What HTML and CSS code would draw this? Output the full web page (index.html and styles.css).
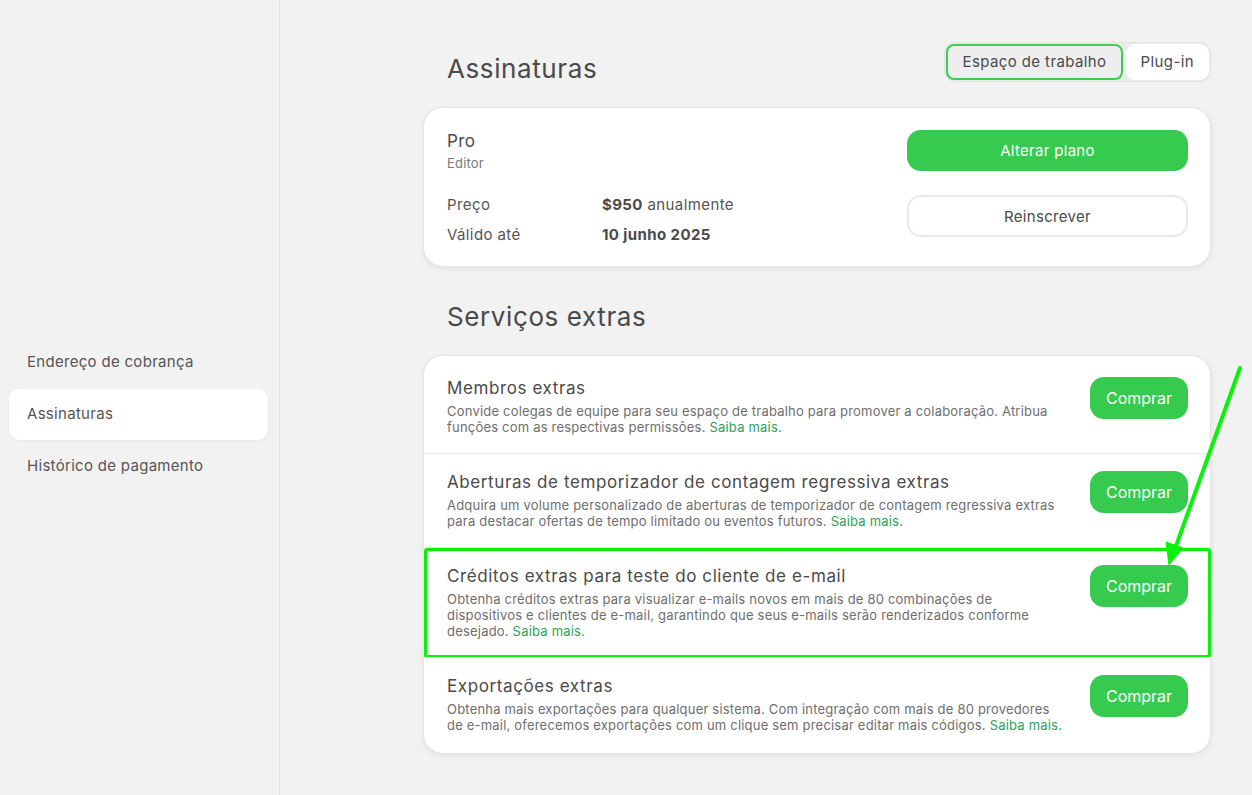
FILE: index.html
```html
<!DOCTYPE html>
<html lang="pt">
<head>
<meta charset="utf-8">
<title>Assinaturas</title>
<link rel="stylesheet" href="styles.css">
</head>
<body>
<div class="app">
  <aside class="sidebar">
    <nav class="nav">
      <a class="nav-item">Endereço de cobrança</a>
      <a class="nav-item active">Assinaturas</a>
      <a class="nav-item">Histórico de pagamento</a>
    </nav>
  </aside>
  <main class="main">
    <div class="content">
      <div class="header">
        <h1 class="title">Assinaturas</h1>
        <div class="toggle">
          <span class="seg seg-active">Espaço de trabalho</span>
          <span class="seg seg-white">Plug-in</span>
        </div>
      </div>
      <section class="card plan">
        <div class="plan-info">
          <div class="plan-name">Pro</div>
          <div class="plan-role">Editor</div>
          <div class="plan-rows">
            <div class="plan-row"><span class="lbl">Preço</span><span class="val"><b>$950</b> anualmente</span></div>
            <div class="plan-row"><span class="lbl">Válido até</span><span class="val"><b>10 junho 2025</b></span></div>
          </div>
        </div>
        <div class="plan-actions">
          <button class="btn btn-green btn-wide">Alterar plano</button>
          <button class="btn btn-outline btn-wide">Reinscrever</button>
        </div>
      </section>
      <h2 class="title title2">Serviços extras</h2>
      <section class="card extras">
        <div class="extra">
          <div class="extra-text">
            <div class="extra-title">Membros extras</div>
            <p class="extra-desc">Convide colegas de equipe para seu espaço de trabalho para promover a colaboração. Atribua funções com as respectivas permissões. <a class="link">Saiba mais.</a></p>
          </div>
          <button class="btn btn-green btn-buy">Comprar</button>
        </div>
        <div class="extra">
          <div class="extra-text">
            <div class="extra-title">Aberturas de temporizador de contagem regressiva extras</div>
            <p class="extra-desc">Adquira um volume personalizado de aberturas de temporizador de contagem regressiva extras para destacar ofertas de tempo limitado ou eventos futuros. <a class="link">Saiba mais.</a></p>
          </div>
          <button class="btn btn-green btn-buy">Comprar</button>
        </div>
        <div class="extra">
          <div class="extra-text">
            <div class="extra-title">Créditos extras para teste do cliente de e-mail</div>
            <p class="extra-desc">Obtenha créditos extras para visualizar e-mails novos em mais de 80 combinações de dispositivos e clientes de e-mail, garantindo que seus e-mails serão renderizados conforme desejado. <a class="link">Saiba mais.</a></p>
          </div>
          <button class="btn btn-green btn-buy">Comprar</button>
          <div class="highlight"></div>
        </div>
        <div class="extra">
          <div class="extra-text">
            <div class="extra-title">Exportações extras</div>
            <p class="extra-desc">Obtenha mais exportações para qualquer sistema. Com integração com mais de 80 provedores de e-mail, oferecemos exportações com um clique sem precisar editar mais códigos. <a class="link">Saiba mais.</a></p>
          </div>
          <button class="btn btn-green btn-buy">Comprar</button>
        </div>
      </section>
    </div>
  </main>
  <svg class="arrow" width="1252" height="795" viewBox="0 0 1252 795">
    <line x1="1240" y1="368" x2="1176" y2="546" stroke="#0af20a" stroke-width="4" stroke-linecap="round"/>
    <polygon points="1169,565 1166,542 1183,548" fill="#0af20a" stroke="#0af20a" stroke-width="1" stroke-linejoin="round"/>
  </svg>
</div>
</body>
</html>
```

FILE: styles.css
```css
* { box-sizing: border-box; }
html, body { margin: 0; padding: 0; }
body {
  font-family: Inter, "Noto Sans", "Liberation Sans", sans-serif;
  color: #4a4a4a;
  background: #f2f2f2;
  width: 1252px;
  height: 795px;
  overflow: hidden;
}
.app {
  position: relative;
  display: flex;
  height: 795px;
}
.sidebar {
  width: 280px;
  flex: none;
  border-right: 1px solid #e3e3e3;
  padding: 337px 11px 0 9px;
}
.nav { display: flex; flex-direction: column; }
.nav-item {
  display: block;
  height: 52px;
  line-height: 49px;
  padding: 0 18px;
  font-size: 15px;
  letter-spacing: 0.3px;
  color: #555;
  border-radius: 10px;
}
.nav-item.active {
  background: #fff;
  box-shadow: 0 1px 3px rgba(0,0,0,0.05);
  height: 51px;
  line-height: 49px;
  margin-bottom: 1px;
}
.main {
  flex: 1;
  padding: 42px 41px 0 143px;
}
.content { width: 788px; }
.header {
  display: flex;
  justify-content: space-between;
  align-items: flex-start;
}
.title {
  margin: 11px 0 0 24px;
  font-size: 26px;
  line-height: 32px;
  font-weight: 400;
  color: #4a4a4a;
  letter-spacing: 0.6px;
}
.title2 { margin: 34px 0 22px 24px; }
.toggle {
  display: flex;
  align-items: center;
  height: 40px;
  padding: 1px;
  gap: 3px;
  background: #ececec;
  border: 1px solid #e2e2e2;
  border-radius: 11px;
  margin-right: 0;
}
.seg {
  height: 36px;
  line-height: 32px;
  font-size: 15px;
  letter-spacing: 0.4px;
  color: #4a4a4a;
  border-radius: 8px;
  padding: 0 14px;
}
.seg-active {
  border: 2px solid #3ccc52;
  background: #eeeeee;
}
.seg-white {
  background: #fff;
  border: 2px solid #fff;
  border-radius: 9px;
  padding: 0 13px;
}
.card {
  background: #fff;
  border: 1px solid #e4e4e4;
  border-radius: 20px;
  box-shadow: 0 2px 6px rgba(0,0,0,0.07);
}
.plan {
  margin-top: 22px;
  height: 160px;
  display: flex;
  justify-content: space-between;
  padding: 22px 22px 0 23px;
}
.plan-name { font-size: 17px; line-height: 22px; letter-spacing: 0.4px; }
.plan-role { font-size: 13px; line-height: 18px; color: #777; margin-top: 2px; letter-spacing: 0.2px; }
.plan-rows { margin-top: 22px; display: flex; flex-direction: column; gap: 8px; }
.plan-row { display: flex; font-size: 15px; line-height: 22px; letter-spacing: 0.4px; }
.lbl { width: 155px; color: #555; }
.val { color: #555; }
.val b { font-weight: 700; color: #4a4a4a; }
.plan-actions { display: flex; flex-direction: column; gap: 24px; width: 281px; }
.btn {
  font-family: inherit;
  border: none;
  cursor: pointer;
  font-size: 15px;
  border-radius: 14px;
}
.btn-green { background: #36cb4e; color: #fff; }
.btn-wide { height: 41px; width: 281px; letter-spacing: 0.3px; }
.btn-outline {
  background: #fff;
  color: #4a4a4a;
  border: 2px solid #e9e9e9;
  height: 42px;
}
.extras { padding: 4px 0 2px; }
.extra {
  position: relative;
  display: flex;
  align-items: flex-start;
  gap: 24px;
  padding: 17px 22px 18px 23px;
  border-top: 1px solid #eaeaea;
}
.extra:first-child { border-top: none; }
.extra-text { flex: 1; }
.extra-title { font-size: 17px; line-height: 22px; color: #4a4a4a; letter-spacing: 0.6px; }
.extra-desc {
  margin: 4px 0 0;
  font-size: 13px;
  line-height: 16px;
  color: #6e6e6e;
  letter-spacing: 0.2px;
}
.link { color: #2f9f5a; }
.btn-buy {
  width: 98px;
  height: 42px;
  flex: none;
  font-size: 16px;
  border-radius: 14px;
}
.highlight {
  position: absolute;
  left: 0;
  right: -1px;
  top: 0;
  bottom: -1px;
  border: 3px solid #0af20a;
  border-radius: 3px;
  pointer-events: none;
}
.arrow {
  position: absolute;
  left: 0;
  top: 0;
  pointer-events: none;
}
```
